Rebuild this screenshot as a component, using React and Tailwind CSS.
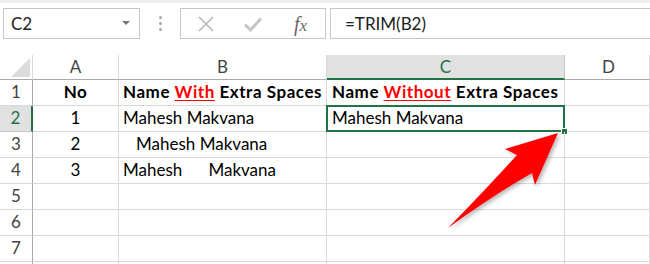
import React from "react";

const cellB = "border-r border-b border-[#d9d9d9]";

function Row({ num, a, b, c, selected, bold }) {
  return (
    <>
      <div
        className={`flex items-end justify-center pb-[1px] border-b ${
          selected
            ? "bg-[#e1e1e1] text-[#217346] border-r-2 border-r-[#217346] border-b-[#c6c6c6]"
            : "text-[#444] border-r border-r-[#ababab] border-b-[#d9d9d9]"
        }`}
      >
        {num}
      </div>
      <div className={`${cellB} flex items-end justify-center pb-[1px] ${bold ? "font-bold tracking-[0.5px]" : ""}`}>{a}</div>
      <div className={`${cellB} flex items-end pl-[4px] pb-[1px] whitespace-pre ${bold ? "font-bold tracking-[0.55px]" : ""}`}>{b}</div>
      <div className={`${cellB} relative flex items-end pl-[5px] pb-[1px] whitespace-pre ${bold ? "font-bold tracking-[0.55px]" : ""}`}>
        {c}
        {selected && (
          <>
            <div className="absolute left-[-1px] top-[-1px] right-[-1px] bottom-[-1px] border-2 border-[#217346]" />
            <div className="absolute right-[-4px] bottom-[-4px] w-[7px] h-[7px] bg-[#217346] border border-white" />
          </>
        )}
      </div>
      <div className={`${cellB}`} />
    </>
  );
}

export default function App() {
  return (
    <div className="w-[650px] h-[264px] overflow-hidden bg-white relative font-['Lato',sans-serif] text-[17px] text-black">
      {/* top bar */}
      <div className="h-[3px] bg-[#f0f0f0]" />
      <div className="flex items-center h-[52px] pt-[4px] pb-[15px]">
        <div className="ml-[3px] w-[137px] h-[31px] border border-[#c6c6c6] flex items-center justify-between pl-[7px] pr-[9px] text-[17px] text-[#222]">
          <span>C2</span>
          <svg width="8" height="5" viewBox="0 0 8 5">
            <path d="M0 0 L8 0 L4 4 Z" fill="#777" />
          </svg>
        </div>
        <div className="w-[40px] flex flex-col items-center gap-[3px]">
          <span className="w-[3px] h-[3px] rounded-full bg-[#a6a6a6]" />
          <span className="w-[3px] h-[3px] rounded-full bg-[#a6a6a6]" />
          <span className="w-[3px] h-[3px] rounded-full bg-[#a6a6a6]" />
        </div>
        <div className="w-[146px] h-[31px] border border-[#c6c6c6] flex items-center">
          <svg className="ml-[16px]" width="18" height="18" viewBox="0 0 18 18">
            <path d="M2 2 L16 16 M16 2 L2 16" stroke="#b9b9b9" strokeWidth="1.6" fill="none" />
          </svg>
          <svg className="ml-[29px]" width="18" height="16" viewBox="0 0 18 16">
            <path d="M1 8.5 L6.5 14 L17 2.5" stroke="#c4c4c4" strokeWidth="3" fill="none" />
          </svg>
          <span className="ml-[32px] font-['Liberation_Serif',serif] italic text-[20px] text-[#666] leading-none">
            f<span className="text-[17px]">x</span>
          </span>
        </div>
        <div className="ml-[4px] flex-1 h-[31px] border border-[#c6c6c6] border-r-0 flex items-center pl-[14px] text-[17px] text-[#222]">
          =TRIM(B2)
        </div>
      </div>

      {/* grid */}
      <div className="grid grid-cols-[33px_86px_208px_238px_1fr] grid-rows-[25px_26px_26px_26px_26px_26px_26px_26px_26px]">
        {/* header */}
        <div className="border-r border-r-[#d9d9d9] border-b border-b-[#ababab] relative">
          <svg className="absolute right-[2px] bottom-[2px]" width="19" height="19" viewBox="0 0 19 19">
            <path d="M19 0 L19 19 L0 19 Z" fill="#dcdcdc" />
          </svg>
        </div>
        <div className="border-r border-r-[#d9d9d9] border-b border-b-[#ababab] flex items-center justify-center text-[#444]">A</div>
        <div className="border-r border-r-[#d9d9d9] border-b border-b-[#ababab] flex items-center justify-center text-[#444]">B</div>
        <div className="border-r border-r-[#c6c6c6] border-b-2 border-b-[#217346] bg-[#e1e1e1] flex items-center justify-center text-[#217346] pt-[1px]">C</div>
        <div className="border-r border-r-[#d9d9d9] border-b border-b-[#ababab] flex items-center justify-start pl-[37px] text-[#444]">D</div>

        <Row
          num="1"
          bold
          a="No"
          b={<span>Name <span className="text-[#ff0000] underline underline-offset-2">With</span> Extra Spaces</span>}
          c={<span>Name <span className="text-[#ff0000] underline underline-offset-2">Without</span> Extra Spaces</span>}
        />
        <Row num="2" a="1" b="Mahesh Makvana" c="Mahesh Makvana" selected />
        <Row num="3" a="2" b="   Mahesh Makvana" c="" />
        <Row num="4" a="3" b={"Mahesh      Makvana"} c="" />
        <Row num="5" a="" b="" c="" />
        <Row num="6" a="" b="" c="" />
        <Row num="7" a="" b="" c="" />
        <Row num="" a="" b="" c="" />
      </div>

      {/* arrow */}
      <svg className="absolute left-0 top-0 pointer-events-none" width="650" height="264" viewBox="0 0 650 264">
        <defs>
          <filter id="sh" x="-20%" y="-20%" width="140%" height="140%">
            <feDropShadow dx="2" dy="2" stdDeviation="2" floodColor="#000" floodOpacity="0.3" />
          </filter>
        </defs>
        <path
          d="M558 133 L505 149 L517 155 Q485 190 448 228 Q492 196 532 173 L535 185 Z"
          fill="#ff0000"
          filter="url(#sh)"
        />
      </svg>
    </div>
  );
}
